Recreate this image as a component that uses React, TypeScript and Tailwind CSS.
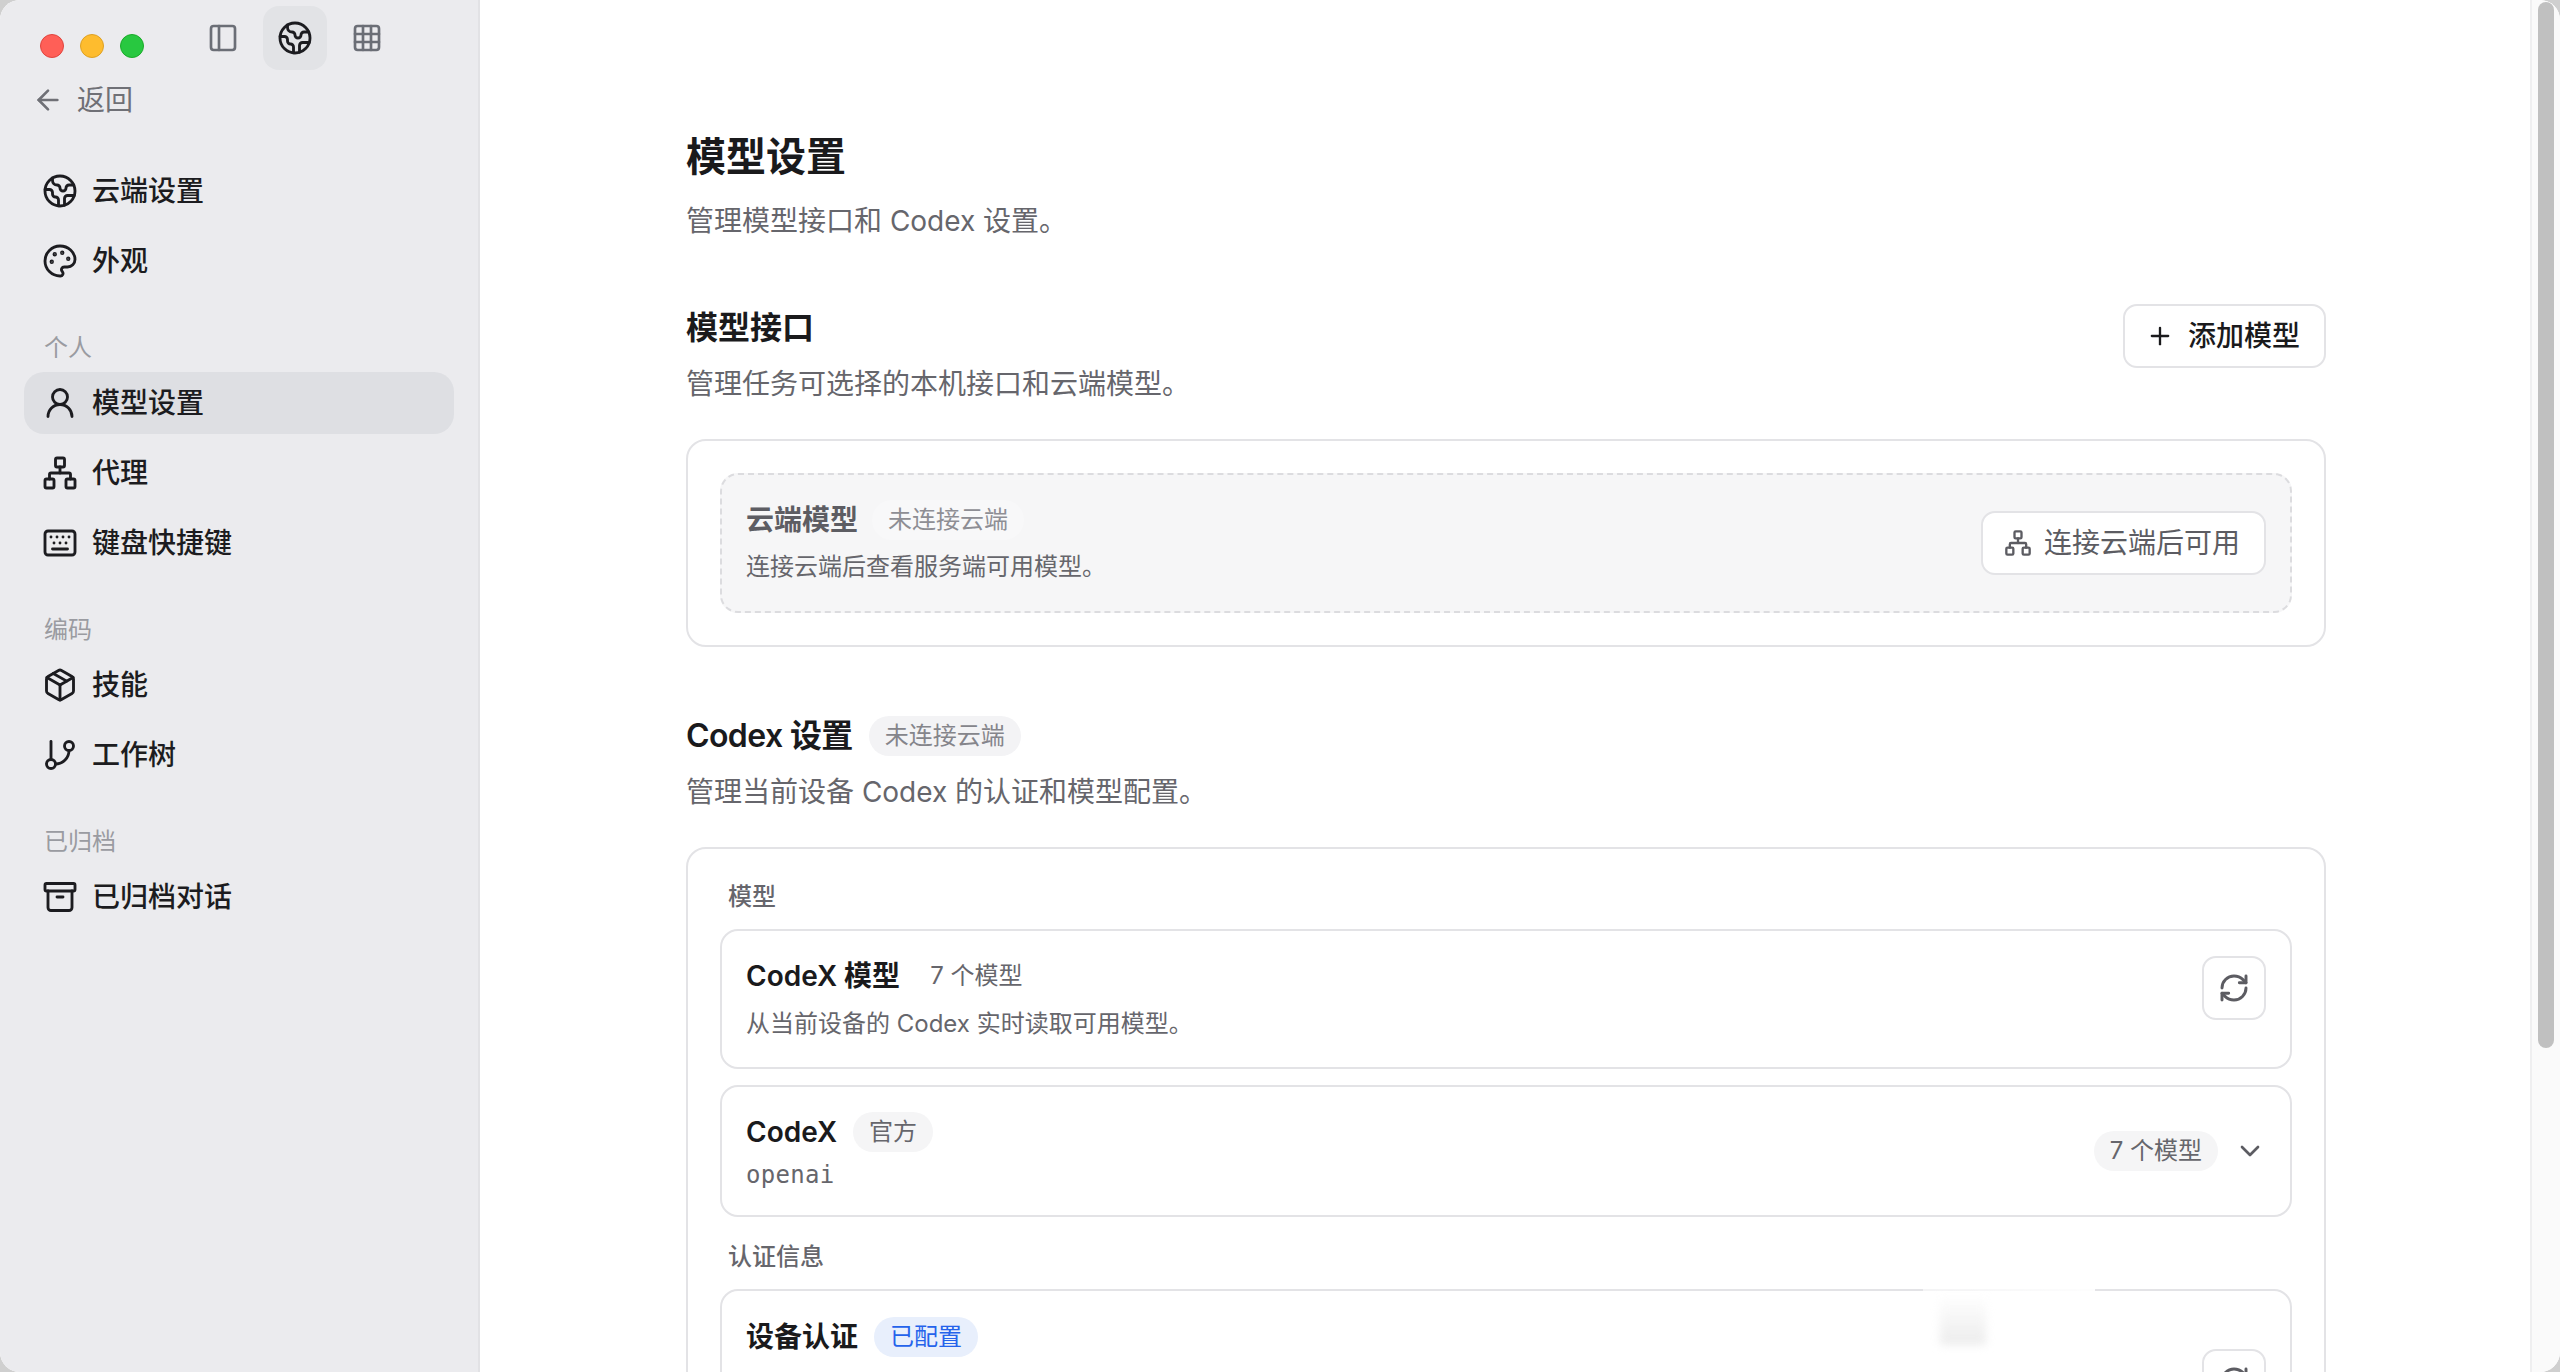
import React from "react";
import { ArrowLeft, Archive, ChevronDown, Earth, GitBranch, Grid3x3, Keyboard, Network, Package, Palette, PanelLeft, Plus, RefreshCw, UserRound } from "lucide-react";

const Row = ({ icon: I, label, active }: { icon: any; label: string; active?: boolean }) => (
  <div className={`flex h-[62px] items-center gap-[14px] rounded-[20px] pl-[18px] ${active ? "bg-[#dedfe3]" : ""}`}>
    <I size={36} strokeWidth={1.9} className="text-[#1c1c20]" />
    <span className="text-[28px] font-medium text-[#1c1c20]">{label}</span>
  </div>
);

const SectionLabel = ({ children }: { children: React.ReactNode }) => (
  <div className="mt-[40px] mb-[8px] pl-[20px] text-[24px] leading-[32px] text-[#9a9ba1]">{children}</div>
);

const Pill = ({ children, className = "" }: { children: React.ReactNode; className?: string }) => (
  <span className={`inline-flex h-[40px] items-center rounded-full px-[16px] text-[24px] ${className}`}>{children}</span>
);

const RefreshButton = () => (
  <div className="flex h-[64px] w-[64px] shrink-0 items-center justify-center rounded-[14px] border-2 border-[#e3e3e6] bg-white">
    <RefreshCw size={32} strokeWidth={2.2} className="text-[#5c5c62]" />
  </div>
);

export default function App() {
  return (
    <div className="relative flex h-[1372px] w-[2560px] overflow-hidden bg-[#cfcfcf] font-['Inter','Noto_Sans_CJK_SC',sans-serif]">
      <div className="flex h-full w-full overflow-hidden rounded-[20px] bg-white">
        <aside className="flex h-full w-[480px] shrink-0 flex-col border-r-2 border-[#e2e2e5] bg-[#ebebee] pl-[24px] pr-[24px]">
          <div className="flex h-[76px] shrink-0 items-start">
            <div className="mt-[34px] flex gap-[16px] pl-[16px]">
              <span className="h-[24px] w-[24px] rounded-full border border-[#e0443e] bg-[#ff5f57]" />
              <span className="h-[24px] w-[24px] rounded-full border border-[#dea123] bg-[#febc2e]" />
              <span className="h-[24px] w-[24px] rounded-full border border-[#1aab29] bg-[#28c840]" />
            </div>
            <div className="mt-[6px] ml-[51px] flex items-center gap-[12px]">
              <div className="flex h-[64px] w-[56px] items-center justify-center"><PanelLeft size={32} strokeWidth={2} className="text-[#6b6e76]" /></div>
              <div className="flex h-[64px] w-[64px] items-center justify-center rounded-[16px] bg-[#e2e3e6]"><Earth size={36} strokeWidth={1.9} className="text-[#1c1c20]" /></div>
              <div className="flex h-[64px] w-[56px] items-center justify-center"><Grid3x3 size={32} strokeWidth={2} className="text-[#6b6e76]" /></div>
            </div>
          </div>
          <div className="flex h-[48px] items-center gap-[13px] pl-[8px] text-[#6f7076]">
            <ArrowLeft size={32} strokeWidth={2} />
            <span className="text-[28px]">返回</span>
          </div>
          <nav className="mt-[36px] flex flex-col gap-[8px]">
            <Row icon={Earth} label="云端设置" />
            <Row icon={Palette} label="外观" />
          </nav>
          <SectionLabel>个人</SectionLabel>
          <nav className="flex flex-col gap-[8px]">
            <Row icon={UserRound} label="模型设置" active />
            <Row icon={Network} label="代理" />
            <Row icon={Keyboard} label="键盘快捷键" />
          </nav>
          <SectionLabel>编码</SectionLabel>
          <nav className="flex flex-col gap-[8px]">
            <Row icon={Package} label="技能" />
            <Row icon={GitBranch} label="工作树" />
          </nav>
          <SectionLabel>已归档</SectionLabel>
          <nav className="flex flex-col gap-[8px]">
            <Row icon={Archive} label="已归档对话" />
          </nav>
        </aside>

        <main className="min-w-0 flex-1 overflow-hidden pl-[206px] pt-[130px]">
          <div className="w-[1640px]">
            <h1 className="text-[40px] font-semibold leading-[54px] text-[#1a1a1c]">模型设置</h1>
            <p className="mt-[15px] text-[28px] leading-[44px] text-[#66666c]">管理模型接口和 Codex 设置。</p>

            <div className="mt-[61px] flex items-start justify-between">
              <div>
                <h2 className="pt-[2px] text-[32px] font-semibold leading-[44px] text-[#1a1a1c]">模型接口</h2>
                <p className="mt-[12px] text-[28px] leading-[44px] text-[#66666c]">管理任务可选择的本机接口和云端模型。</p>
              </div>
              <div className="flex h-[64px] items-center gap-[14px] rounded-[14px] border-2 border-[#e3e3e6] bg-white pl-[21px] pr-[24px]">
                <Plus size={28} strokeWidth={2} className="text-[#1a1a1c]" />
                <span className="text-[28px] font-medium text-[#1a1a1c]">添加模型</span>
              </div>
            </div>

            <section className="mt-[33px] rounded-[20px] border-2 border-[#e3e3e6] bg-white p-[32px]">
              <div className="flex h-[140px] items-center justify-between rounded-[18px] border-2 border-dashed border-[#dcdcdf] bg-[#f6f6f7] pl-[24px] pr-[24px]">
                <div className="pb-[3px]">
                  <div className="flex h-[44px] items-center">
                    <span className="text-[28px] font-semibold text-[#5d5d63]">云端模型</span>
                    <Pill className="ml-[14px] bg-[#f8f8f9] text-[#8e8e94]">未连接云端</Pill>
                  </div>
                  <p className="mt-[7px] text-[24px] leading-[36px] text-[#66666c]">连接云端后查看服务端可用模型。</p>
                </div>
                <div className="flex h-[64px] items-center gap-[12px] rounded-[14px] border-2 border-[#e3e3e6] bg-white pl-[21px] pr-[24px]">
                  <Network size={28} strokeWidth={2} className="text-[#5c5c62]" />
                  <span className="text-[28px] text-[#5c5c62]">连接云端后可用</span>
                </div>
              </div>
            </section>

            <div className="mt-[67px] flex h-[44px] items-center">
              <h2 className="text-[32px] font-semibold tracking-[-0.6px] text-[#1a1a1c]">Codex 设置</h2>
              <Pill className="ml-[16px] bg-[#f3f3f5] text-[#85858b]">未连接云端</Pill>
            </div>
            <p className="mt-[12px] text-[28px] leading-[44px] text-[#66666c]">管理当前设备 Codex 的认证和模型配置。</p>

            <section className="mt-[33px] rounded-[20px] border-2 border-[#e3e3e6] bg-white px-[32px] pt-[32px]">
              <div className="pl-[8px] text-[24px] font-medium leading-[32px] text-[#66666c]">模型</div>
              <div className="mt-[16px] flex h-[140px] items-center justify-between rounded-[18px] border-2 border-[#e3e3e6] px-[24px]">
                <div className="pb-[3px]">
                  <div className="flex h-[44px] items-center">
                    <span className="text-[28px] font-semibold text-[#1a1a1c]">CodeX 模型</span>
                    <span className="ml-[30px] text-[24px] text-[#66666c]">7 个模型</span>
                  </div>
                  <p className="mt-[8px] text-[24px] leading-[36px] text-[#66666c]">从当前设备的 Codex 实时读取可用模型。</p>
                </div>
                <div className="mb-[22px]"><RefreshButton /></div>
              </div>
              <div className="mt-[16px] flex h-[132px] items-center justify-between rounded-[18px] border-2 border-[#e3e3e6] px-[24px]">
                <div>
                  <div className="flex h-[44px] items-center">
                    <span className="text-[28px] font-semibold text-[#1a1a1c]">CodeX</span>
                    <Pill className="ml-[16px] bg-[#f5f5f6] text-[#66666c]">官方</Pill>
                  </div>
                  <p className="mt-[3px] font-['DejaVu_Sans_Mono',monospace] text-[24px] leading-[36px] tracking-[0.3px] text-[#66666c]">openai</p>
                </div>
                <div className="flex items-center gap-[16px]">
                  <Pill className="bg-[#f5f5f6] text-[#66666c]">7 个模型</Pill>
                  <ChevronDown size={32} strokeWidth={2} className="text-[#5c5c62]" />
                </div>
              </div>
              <div className="mt-[24px] pl-[8px] text-[24px] font-medium leading-[32px] text-[#66666c]">认证信息</div>
              <div className="mt-[16px] flex h-[140px] items-start justify-between rounded-[18px] border-2 border-[#e3e3e6] px-[24px] pt-[24px]">
                <div className="flex h-[44px] items-center">
                  <span className="text-[28px] font-semibold text-[#1a1a1c]">设备认证</span>
                  <Pill className="ml-[16px] bg-[#e8effc] text-[#2563eb]">已配置</Pill>
                </div>
                <div className="mt-[34px]"><RefreshButton /></div>
              </div>
            </section>
          </div>
        </main>

        <div className="h-full w-[30px] shrink-0 border-l-2 border-[#efeff0] bg-[#fafafa] pl-[6px] pr-[6px] pt-[2px]">
          <div className="h-[1046px] w-[16px] rounded-full bg-[#c0c0c0]" />
        </div>
      </div>

      <div className="absolute left-[1923px] top-[1265px] h-[82px] w-[172px] bg-gradient-to-r from-white/60 to-white/95" />
      <div className="absolute left-[1940px] top-[1295px] h-[50px] w-[46px] bg-gradient-to-b from-transparent to-[#ececec] blur-[4px]" />
    </div>
  );
}
